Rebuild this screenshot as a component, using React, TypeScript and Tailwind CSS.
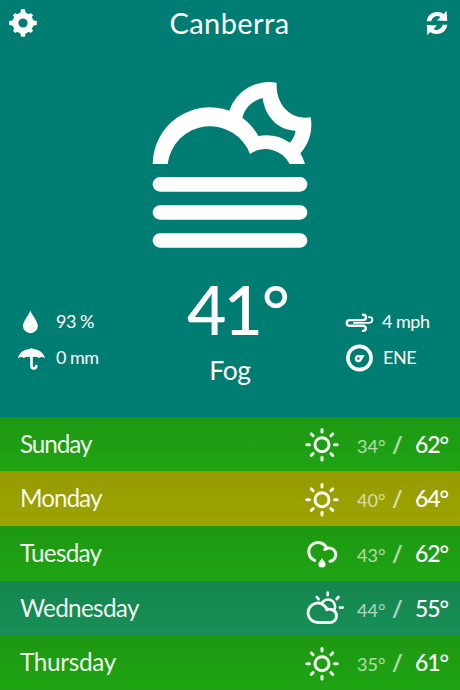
type Kind = "sun" | "rain" | "partly";

const forecast: {
  day: string;
  icon: Kind;
  low: number;
  high: number;
  bg: string;
  tracking: string;
}[] = [
  { day: "Sunday", icon: "sun", low: 34, high: 62, bg: "from-[#1e9812] to-[#1ea413]", tracking: "tracking-[-1.1px]" },
  { day: "Monday", icon: "sun", low: 40, high: 64, bg: "from-[#969b00] to-[#9ca400]", tracking: "tracking-[-1px]" },
  { day: "Tuesday", icon: "rain", low: 43, high: 62, bg: "from-[#1e9812] to-[#1ea413]", tracking: "tracking-[-0.75px]" },
  { day: "Wednesday", icon: "partly", low: 44, high: 55, bg: "from-[#15854f] to-[#188f57]", tracking: "tracking-[-0.7px]" },
  { day: "Thursday", icon: "sun", low: 35, high: 61, bg: "from-[#1e9812] to-[#1ea413]", tracking: "tracking-[-0.3px]" },
];

const angles = [0, 45, 90, 135, 180, 225, 270, 315];

function Gear() {
  return (
    <svg width="30" height="30" viewBox="-15 -15 30 30" aria-hidden="true">
      <circle r="7.6" fill="none" stroke="#fff" strokeWidth="6" />
      {angles.map((a) => (
        <path
          key={a}
          d={a % 90 ? "M-2.2 -9 L-1.7 -12.6 H1.7 L2.2 -9Z" : "M-3 -9 L-1.9 -13.8 H1.9 L3 -9Z"}
          transform={`rotate(${a})`}
          fill="#fff"
        />
      ))}
    </svg>
  );
}

function Refresh() {
  const half = "M-10.3 -1.8 C-9.5 -8 -4.5 -11 0.2 -11 C3.2 -11 5.2 -10.2 6.8 -9 L9.6 -12.2 L10.2 -2 L0 -2.4 L3.4 -6 C0.4 -8 -4.2 -6.8 -5.8 -1.8Z";
  return (
    <svg width="24" height="26" viewBox="-12 -13 24 26" fill="#fff" aria-hidden="true">
      <path d={half} />
      <path d={half} transform="rotate(180)" />
    </svg>
  );
}

function FogNight() {
  return (
    <svg width="180" height="190" viewBox="0 0 540 570" fill="#fff" aria-hidden="true">
      {/* cloud and moon outline, the second subpath is the hole in the moon */}
      <path
        fillRule="evenodd"
        d="M38 282 A172 172 0 0 1 268 122 A126 126 0 0 1 410 38 C406 102 450 152 512 142 A126 126 0 0 1 481 250 Q490 265 495 282 H449 A81 81 0 0 0 330 252 A128 128 0 0 0 83 282Z
           M307 143 A81 81 0 0 1 368 84 C376 140 412 180 467 182 Q463 203 450 218 A126 126 0 0 0 355 198 A172 172 0 0 0 307 143Z"
      />
      <rect x="38" y="321" width="464" height="44" rx="22" />
      <rect x="38" y="406" width="464" height="43" rx="21.5" />
      <rect x="38" y="490" width="464" height="43" rx="21.5" />
    </svg>
  );
}

function Drop() {
  return (
    <svg width="30" height="28" viewBox="0 0 30 28" fill="#fff" aria-hidden="true">
      <path d="M14.4 2.5 C16 7.5 21.8 13 21.8 18 A7.4 7.2 0 0 1 7 18 C7 13 12.8 7.5 14.4 2.5Z" />
    </svg>
  );
}

function Umbrella() {
  return (
    <svg width="30" height="28" viewBox="0 0 30 28" aria-hidden="true">
      <path
        d="M1.9 14.5 C3 8.5 9 4.8 15.5 4.8 C22 4.8 27.8 8.5 29 14.5 Q26 11.8 23 14 Q19 11.6 15.5 14 Q11.5 11.6 8 14 Q5 11.8 1.9 14.5Z"
        fill="#fff"
      />
      <path d="M15.5 4.5 V21 A2.4 2.4 0 0 0 20.3 21" transform="translate(0 1)" fill="none" stroke="#fff" strokeWidth="2.6" strokeLinecap="round" />
    </svg>
  );
}

function Wind() {
  return (
    <svg width="30" height="28" viewBox="0 0 30 28" fill="none" stroke="#fff" strokeWidth="2.4" strokeLinecap="round" aria-hidden="true">
      <path d="M18 6.7 C20.4 6.7 21 8.2 21 9.3 C21 11.5 19.5 12.1 17.8 12.1 H4.6 A2.8 2.8 0 0 0 4.6 17.7 H17.5 C19.5 17.7 20.8 18.8 20.8 20.3 C20.8 22 19.6 22.9 18 22.9" />
      <path d="M24 9.2 C26.3 8.8 27.6 10.2 27.4 12 C27.2 14 25.8 14.9 23.8 14.9 H9" strokeWidth="1.9" />
    </svg>
  );
}

function Compass() {
  return (
    <svg width="30" height="28" viewBox="0 0 30 28" aria-hidden="true">
      <circle cx="14.5" cy="14" r="11.6" fill="none" stroke="#fff" strokeWidth="3.6" />
      <path
        fillRule="evenodd"
        fill="#fff"
        d="M19.6 11.2 L16.8 16 A3.6 3.6 0 1 1 13 11.1Z M13.4 13.3 A1.3 1.3 0 1 0 13.4 15.9 A1.3 1.3 0 1 0 13.4 13.3Z"
      />
    </svg>
  );
}

function WeatherIcon({ kind }: { kind: Kind }) {
  return (
    <svg
      width="44"
      height="40"
      viewBox="0 0 44 40"
      fill="none"
      stroke="#fff"
      strokeOpacity="0.94"
      strokeWidth="3"
      strokeLinecap="round"
      className="shrink-0 self-center"
      aria-hidden="true"
    >
      {kind === "sun" && (
        <g transform="translate(20 20.7)">
          <circle r="7" />
          {angles.map((a) => (
            <path key={a} d="M0 -12.6 V-15.2" transform={`rotate(${a})`} />
          ))}
        </g>
      )}
      {kind === "rain" && (
        <>
          <path d="M12.7 27.4 A9.3 9.3 0 1 1 24.8 15.4" />
          <path d="M22.8 16.5 A6.7 6.7 0 1 1 28 28.3" />
          <path d="M20 25 C20.8 27.3 23.6 28.8 23.6 31 A3.6 3.6 0 0 1 16.4 31 C16.4 28.8 19.2 27.3 20 25Z" fill="#fff" stroke="none" />
        </>
      )}
      {kind === "partly" && (
        <>
          <path d="M15.9 34.6 A9.75 9.75 0 1 1 24.9 21.4 Q26.2 21 27.8 21.2 A6.7 6.7 0 0 1 27.8 34.6Z" />
          <path d="M20 15 A7 7 0 0 1 32.6 21 M21.8 17.5 Q24.5 19 25 22" strokeWidth="2.6" />
          <path d="M25.7 4.6 V7.2 M14.8 9 L16.6 11.2 M36.5 9 L34.7 11 M38 19.6 H40.8" strokeWidth="2.7" />
        </>
      )}
    </svg>
  );
}

export default function App() {
  return (
    <div className="flex h-[690px] w-[460px] flex-col overflow-hidden bg-[#007d73] font-['Lato',sans-serif] text-white">
      <header className="flex h-[46px] shrink-0 items-center justify-between pr-[11px] pl-2">
        <Gear />
        <h1 className="mr-1 text-[29px] leading-[46px] tracking-[0.4px]">Canberra</h1>
        <Refresh />
      </header>

      <main className="flex h-[370.5px] shrink-0 flex-col items-center pt-6">
        <FogNight />
        <div className="flex w-full flex-1 justify-between pt-[22px]">
          <div className="flex w-[150px] flex-col gap-2 pt-[26px] pl-4 text-[18px] leading-7 tracking-[-0.5px]">
            <div className="flex items-center gap-[10px]">
              <Drop />
              <span className="-mt-0.5">93 %</span>
            </div>
            <div className="flex items-center gap-[10px]">
              <Umbrella />
              <span className="-mt-0.5">0 mm</span>
            </div>
          </div>

          <div className="flex flex-col items-center">
            <div className="-mt-[3px] pl-[14px] text-[68px] leading-[60px] font-medium tracking-[-3px]">
              41<span className="pl-[2px]">°</span>
            </div>
            <div className="pt-[11px] text-[26.5px] leading-[40px] tracking-[-0.3px]">Fog</div>
          </div>

          <div className="flex w-[150px] flex-col gap-2 pt-[26px] pl-[35px] text-[18px] leading-7 tracking-[-0.5px]">
            <div className="flex items-center gap-[7px]">
              <Wind />
              <span className="-mt-0.5">4 mph</span>
            </div>
            <div className="flex items-center gap-[8px]">
              <Compass />
              <span className="-mt-0.5">ENE</span>
            </div>
          </div>
        </div>
      </main>

      <ul className="flex-1">
        {forecast.map((f) => (
          <li
            key={f.day}
            className={`flex h-[54.7px] items-baseline bg-gradient-to-b leading-[54.7px] ${f.bg}`}
          >
            <span className={`w-[302px] pl-5 text-[24.3px] text-white/95 ${f.tracking}`}>{f.day}</span>
            <WeatherIcon kind={f.icon} />
            <span className="w-[46px] pl-[11px] text-[18px] text-white/65">{f.low}°</span>
            <span className="w-[23px] text-[23px] font-bold text-white/65">/</span>
            <span className="text-[23px] font-medium tracking-[-1.1px]">{f.high}°</span>
          </li>
        ))}
      </ul>
    </div>
  );
}
